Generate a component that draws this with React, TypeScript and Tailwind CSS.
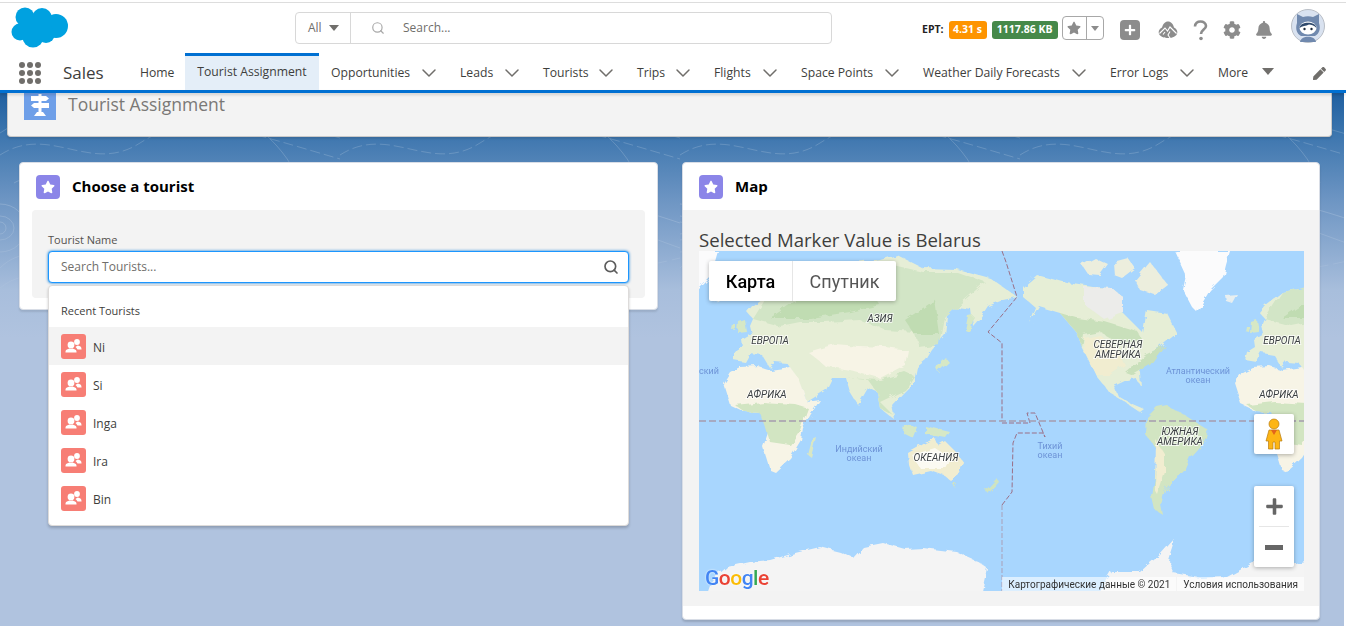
import { FaBell, FaCog, FaPen, FaPlus, FaStar } from 'react-icons/fa'
import { ChevronDown, Search } from 'lucide-react'

const navItems = [
  { label: 'Opportunities', w: 'w-[79px]' },
  { label: 'Leads', w: 'w-[33px]' },
  { label: 'Tourists', w: 'w-[44px]' },
  { label: 'Trips', w: 'w-[27px]' },
  { label: 'Flights', w: 'w-[37px]' },
  { label: 'Space Points', w: 'w-[72px]' },
  { label: 'Weather Daily Forecasts', w: 'w-[137px]' },
  { label: 'Error Logs', w: 'w-[58px]' },
]

const tourists = ['Ni', 'Si', 'Inga', 'Ira', 'Bin']

function Cloud() {
  return (
    <svg viewBox="0 0 58 42" className="h-[42px] w-[58px]" fill="#00a1e0">
      <circle cx="14" cy="10" r="9.5" />
      <circle cx="31" cy="11" r="10" />
      <circle cx="45" cy="19" r="12" />
      <circle cx="9" cy="25" r="8.5" />
      <circle cx="22" cy="30" r="10.5" />
      <circle cx="35" cy="27" r="9" />
      <rect x="10" y="10" width="30" height="20" />
    </svg>
  )
}

function Trailhead() {
  return (
    <svg viewBox="0 0 20 18" className="h-[18px] w-5">
      <path d="M10 0.5 C13 0.5 15 3 16 6.5 C19 8 20 10.5 19 13 C17 16.5 13 17 10 17 C7 17 3 16.5 1 13 C0 10.5 1 8 4 6.5 C5 3 7 0.5 10 0.5 Z" fill="#8c8c8c" />
      <path d="M1.5 12.5 L7 7 L9.5 10 L12 6 L18.5 12.5 M7 11 L5 13.5 M12 10.5 L10 14 L12 17" stroke="#fff" strokeWidth="1.1" fill="none" />
    </svg>
  )
}

function QuestionMark() {
  return (
    <svg viewBox="0 0 15 21" className="h-[21px] w-[15px]">
      <path d="M2 6.5 C2 3 4.5 1.5 7.5 1.5 C10.5 1.5 13 3.2 13 6 C13 9.5 8 9.8 8 14" fill="none" stroke="#8c8c8c" strokeWidth="2.6" />
      <circle cx="8" cy="18.5" r="1.8" fill="#8c8c8c" />
    </svg>
  )
}

function Astro() {
  return (
    <svg viewBox="0 0 34 34" className="h-[34px] w-[34px]">
      <circle cx="17" cy="17" r="16.5" fill="#d9e2f0" stroke="#b9bec6" />
      <path d="M6 5 L12 8 C15 7 19 7 22 8 L28 5 L28 14 C30 20 28 25 24 27 L10 27 C6 25 4 20 6 14 Z" fill="#7089ae" />
      <ellipse cx="17" cy="19" rx="8.5" ry="6.5" fill="#ffffff" />
      <path d="M8.5 19 C9 12 25 12 25.5 19 C23 16 20 15.5 18 15.5 C15 17 11 17 8.5 19 Z" fill="#2f4a6d" />
      <circle cx="13.5" cy="20" r="1.2" fill="#1d2b3e" />
      <circle cx="20.5" cy="20" r="1.2" fill="#1d2b3e" />
      <path d="M9 33 C10 26 24 26 25 33 Z" fill="#7089ae" />
    </svg>
  )
}

function People() {
  return (
    <svg viewBox="0 0 25 25" className="mt-px h-[25px] w-[25px] rounded-[3px] bg-[#f77e75]">
      <circle cx="16" cy="8" r="2.9" fill="#fff" />
      <path d="M16.8 11.6 C19 12 20.5 13 20.5 15 L20.5 15.6 L16.5 15.6 C16 14.4 15 13.6 14.5 13 C15 12.4 16 12 16.8 11.6 Z" fill="#fff" />
      <circle cx="10" cy="11" r="3.4" fill="#fff" />
      <path d="M4.5 18.5 L4.5 17.5 C4.5 15.6 7 15 8.5 14.5 C9.5 15.1 10.5 15.1 11.5 14.5 C13 15 15.5 15.6 15.5 17.5 L15.5 18.5 Z" fill="#fff" />
    </svg>
  )
}

function StarTile() {
  return (
    <span className="flex h-6 w-6 items-center justify-center rounded-[4px] bg-[#8b85e8]">
      <FaStar className="h-[14px] w-[14px] text-white" />
    </span>
  )
}

function Signpost() {
  return (
    <svg viewBox="0 0 32 27" className="h-[27px] w-8">
      <rect x="14.5" y="1" width="3" height="22" fill="#fff" />
      <path d="M7 3 H22 L25 5.5 L22 8 H7 Z" fill="#fff" />
      <path d="M25 10 H10 L7 12.5 L10 15 H25 Z" fill="#fff" />
      <path d="M10 23 H22 L19 19 H13 Z" fill="#fff" />
    </svg>
  )
}

function Contours() {
  return (
    <svg className="pointer-events-none absolute inset-0 h-full w-full [mask-image:linear-gradient(180deg,#000_0%,#000_22%,transparent_42%)]">
      <defs>
        <pattern id="topo" width="340" height="210" patternUnits="userSpaceOnUse">
          <g fill="none" stroke="#ffffff" strokeOpacity="0.17" strokeWidth="1">
            <path d="M0 40 C40 10 80 60 130 30 S220 10 340 45" />
            <path d="M0 62 C50 30 90 82 140 50 S230 34 340 66" strokeDasharray="10 4" />
            <circle cx="0" cy="135" r="6" />
            <ellipse cx="0" cy="135" rx="14" ry="12" />
            <ellipse cx="0" cy="135" rx="26" ry="24" />
            <path d="M0 175 C20 155 40 165 60 150 C90 130 110 160 170 130 S250 100 340 130" />
            <path d="M0 195 C30 170 60 195 90 170 C120 145 160 195 190 150 S270 130 340 155" />
            <path d="M150 210 C170 180 240 190 340 165" strokeDasharray="14 5" />
            <path d="M230 0 C240 30 280 40 300 90" />
            <path d="M10 0 C15 18 30 25 50 20" />
            <path d="M14 90 C30 80 50 90 56 120" />
          </g>
        </pattern>
      </defs>
      <rect width="100%" height="100%" fill="url(#topo)" />
    </svg>
  )
}

const landLabel = 'fill-[#3c4043] stroke-white/70 text-[10px] italic [paint-order:stroke] [stroke-width:2px]'
const seaLabel = 'fill-[#6d93d6] text-[9px]'

function WorldMap() {
  return (
    <svg viewBox="699 251 605 340" className="absolute inset-0 h-[340px] w-[605px]" style={{ fontFamily: 'Roboto, sans-serif' }}>
      <rect x="699" y="251" width="605" height="340" fill="#a8d6fe" />
      <defs>
        {/* rough coasts */}
        <filter id="coast" filterUnits="userSpaceOnUse" x="600" y="200" width="800" height="450">
          <feTurbulence type="fractalNoise" baseFrequency="0.09" numOctaves="3" seed="4" result="n" />
          <feDisplacementMap in="SourceGraphic" in2="n" scale="7" />
        </filter>
        <g id="oldworld">
          {/* eurasia */}
          <path fill="#e6eed6" d="M733 360 L735 352 L743 347 L742 340 L752 334 L750 326 L753 319 L747 312 L753 305 L770 292 L787 289 L797 293 L815 280 L830 272 L845 270 L857 263 L880 260 L897 255 L923 268 L957 269 L990 278 L1017 297 L1003 300 L988 306 L980 318 L973 326 L971 309 L957 307 L947 316 L945 335 L932 350 L926 360 L917 367 L914 382 L903 393 L892 405 L895 420 L880 408 L877 392 L868 388 L858 405 L850 392 L846 378 L832 378 L826 390 L807 402 L797 378 L787 363 L775 362 L770 368 L762 355 L750 353 L745 362 Z" />
          <path fill="#d2e5c6" d="M753 319 L770 292 L787 289 L815 280 L845 270 L880 262 L923 272 L957 272 L985 282 L960 304 L945 318 L940 345 L920 348 L915 332 L885 330 L860 320 L825 322 L800 322 L780 326 Z" />
          <path fill="#c0dcb2" d="M770 318 L800 298 L840 285 L870 288 L880 305 L850 312 L810 318 Z M905 320 L935 300 L940 335 L915 335 Z" />
          <path fill="#f7f4e6" d="M808 352 L835 344 L858 346 L885 347 L908 350 L905 365 L880 378 L850 370 L825 366 Z" />
          <path fill="#cfe4c2" d="M846 378 L868 380 L877 392 L880 408 L893 415 L880 402 L905 390 L914 376 L905 372 L880 380 Z" />
          {/* uk, japan, islands */}
          <path fill="#d6e8c6" d="M739 322 L745 320 L747 332 L738 333 Z M733 325 L737 325 L736 331 L732 330 Z M968 316 L973 315 L969 332 L965 330 Z M936 368 L946 358 L949 362 L938 372 Z M903 423 L918 428 L914 438 L902 432 Z M925 426 L950 432 L946 438 L925 434 Z" />
          {/* africa */}
          <path fill="#f7f4e6" d="M723 383 L730 372 L740 367 L758 366 L770 370 L790 367 L798 378 L807 402 L820 400 L811 414 L803 428 L801 440 L790 458 L775 472 L770 470 L763 447 L769 430 L763 413 L745 412 L730 405 Z" />
          <path fill="#d2e5c2" d="M735 405 L763 402 L795 404 L808 408 L800 430 L790 445 L770 442 L765 425 L760 413 L745 412 Z" />
          <path fill="#d9e7c4" d="M812 440 L817 438 L812 458 L808 455 Z" />
          {/* australia */}
          <path fill="#f1edd0" d="M908 453 L917 448 L925 443 L935 438 L938 445 L945 441 L956 452 L964 463 L958 474 L950 480 L944 475 L930 470 L912 474 L909 465 Z" />
          <path fill="#fbfaf2" d="M912 455 L935 448 L950 458 L945 468 L920 468 Z" />
          <path fill="#cfe4c2" d="M986 490 L997 478 L999 482 L988 494 Z M953 484 L957 484 L955 488 Z" />
        </g>
        <g id="newworld">
          {/* north america */}
          <path fill="#e6eed6" d="M1023 287 L1037 275 L1067 283 L1093 287 L1112 288 L1123 297 L1123 313 L1143 333 L1147 310 L1167 313 L1177 333 L1160 347 L1147 355 L1140 372 L1141 387 L1136 378 L1127 380 L1114 386 L1118 396 L1130 403 L1144 409 L1140 412 L1122 400 L1110 393 L1097 377 L1082 347 L1077 333 L1060 313 L1040 307 L1030 323 L1036 308 L1023 297 Z" />
          <path fill="#ececea" d="M1085 287 L1112 288 L1123 297 L1123 313 L1105 320 L1085 305 Z" />
          <path fill="#c9e0bb" d="M1060 313 L1077 318 L1105 322 L1138 332 L1143 340 L1125 345 L1100 332 L1084 335 L1082 347 L1077 333 Z M1145 355 L1165 345 L1150 365 L1133 375 L1125 372 Z" />
          <path fill="#f1edd0" d="M1084 338 L1100 335 L1118 350 L1125 365 L1110 375 L1096 375 L1085 352 Z" />
          <path fill="#eceedd" d="M1082 265 L1095 258 L1108 264 L1100 275 L1088 274 Z M1113 262 L1128 258 L1135 268 L1122 278 L1114 275 Z M1135 280 L1150 262 L1168 285 L1155 295 L1140 290 Z" />
          {/* greenland */}
          <path fill="#fbfbfc" d="M1175 251 L1230 251 L1226 265 L1223 277 L1210 290 L1197 312 L1192 307 L1183 290 L1186 275 Z" />
          <path fill="#e8eff0" d="M1225 295 L1237 294 L1232 303 L1226 301 Z" />
          {/* south america */}
          <path fill="#d2e5c2" d="M1147 417 L1157 407 L1167 405 L1187 417 L1208 430 L1205 440 L1190 457 L1185 468 L1175 478 L1165 490 L1161 505 L1163 515 L1155 510 L1152 497 L1155 477 L1157 450 L1146 435 Z" />
          <path fill="#f1edd0" d="M1156 440 L1165 455 L1165 472 L1158 495 L1155 490 Z" />
        </g>
      </defs>
      <g filter="url(#coast)">
        <use href="#newworld" x="-512" />
        <use href="#oldworld" />
        <use href="#newworld" />
        <use href="#oldworld" x="512" />
        {/* antarctica */}
        <path fill="#f4f4f4" d="M705 600 L712 580 L727 567 L750 562 L770 560 L795 553 L820 547 L840 552 L853 558 L863 547 L883 543 L905 549 L923 548 L957 552 L975 560 L987 568 L980 600 Z M1095 600 L1112 572 L1140 572 L1150 563 L1160 555 L1175 538 L1168 560 L1174 574 L1200 578 L1227 577 L1253 563 L1285 565 L1320 558 L1320 600 Z" />
      </g>
      {/* date line and equator */}
      <g fill="none" stroke="#9a6f86" strokeWidth="1" strokeDasharray="5 2">
        <path d="M1002 251 L1006 262 L1017 297 L988 332 L1002 343 L1002 421" />
        <path d="M1002 505 L1012 492 L1013 443 L1017 433 L1043 433 L1045 437" />
        <path d="M1002 505 L1002 591" stroke="#a9a0b8" />
        <path d="M1002 423 L1030 423 L1027 413 L1035 413 L1045 437" />
      </g>
      <path d="M699 421 L1304 421" stroke="#a59cae" strokeWidth="1.5" strokeDasharray="7 3" fill="none" />
      {/* labels */}
      <text x="880" y="322" textAnchor="middle" className={landLabel}>АЗИЯ</text>
      <text x="770" y="344" textAnchor="middle" className={landLabel}>ЕВРОПА</text>
      <text x="1282" y="344" textAnchor="middle" className={landLabel}>ЕВРОПА</text>
      <text x="767" y="398" textAnchor="middle" className={landLabel}>АФРИКА</text>
      <text x="1279" y="398" textAnchor="middle" className={landLabel}>АФРИКА</text>
      <text x="1118" y="348" textAnchor="middle" className={landLabel}>СЕВЕРНАЯ</text>
      <text x="1118" y="358" textAnchor="middle" className={landLabel}>АМЕРИКА</text>
      <text x="1180" y="435" textAnchor="middle" className={landLabel}>ЮЖНАЯ</text>
      <text x="1180" y="445" textAnchor="middle" className={landLabel}>АМЕРИКА</text>
      <text x="936" y="461" textAnchor="middle" className={landLabel}>ОКЕАНИЯ</text>
      <text x="1198" y="374" textAnchor="middle" className={seaLabel}>Атлантический</text>
      <text x="1198" y="383" textAnchor="middle" className={seaLabel}>океан</text>
      <text x="699" y="374" className={seaLabel}>ский</text>
      <text x="859" y="452" textAnchor="middle" className={seaLabel}>Индийский</text>
      <text x="859" y="461" textAnchor="middle" className={seaLabel}>океан</text>
      <text x="1050" y="449" textAnchor="middle" className={seaLabel}>Тихий</text>
      <text x="1050" y="458" textAnchor="middle" className={seaLabel}>океан</text>
    </svg>
  )
}

function Pegman() {
  return (
    <svg viewBox="0 0 18 32" className="h-8 w-[18px]">
      <circle cx="9" cy="6" r="5" fill="#fdb515" stroke="#b87b10" strokeWidth="0.7" />
      <path d="M4 12 H14 L17 23 H14.5 V31 H10 V24 H8 V31 H3.5 V23 H1 Z" fill="#fdb515" stroke="#b87b10" strokeWidth="0.7" />
      <path d="M6 12 H12 L9 17 Z" fill="#e2641c" />
    </svg>
  )
}

function MapView() {
  return (
    <div className="relative h-[340px] w-[605px] overflow-hidden">
      <WorldMap />
      <div className="absolute left-[10px] top-[10px] flex h-10 rounded-[2px] bg-white text-[18px] shadow-[0_1px_4px_rgba(0,0,0,0.3)]" style={{ fontFamily: 'Roboto, sans-serif' }}>
        <div className="flex w-[84px] items-center justify-center border-r border-[#e6e6e6] font-medium text-black">Карта</div>
        <div className="flex w-[103px] items-center justify-center text-[#565656]">Спутник</div>
      </div>
      <div className="absolute left-[555px] top-[163px] flex h-10 w-10 items-center justify-center rounded-[2px] bg-white shadow-[0_1px_4px_rgba(0,0,0,0.3)]">
        <Pegman />
      </div>
      <div className="absolute left-[555px] top-[235px] flex h-[81px] w-10 flex-col items-center rounded-[2px] bg-white shadow-[0_1px_4px_rgba(0,0,0,0.3)]">
        <div className="flex h-10 w-full items-center justify-center">
          <FaPlus className="h-[19px] w-[19px] text-[#666666]" />
        </div>
        <div className="h-px w-[30px] bg-[#e6e6e6]" />
        <div className="flex h-10 w-full items-center justify-center">
          <div className="h-[5px] w-[18px] bg-[#666666]" />
        </div>
      </div>
      <div className="absolute bottom-[2px] left-[6px] flex text-[21px] font-medium leading-none tracking-[-0.5px] [text-shadow:0_0_2px_#fff]" style={{ fontFamily: 'Roboto, sans-serif' }}>
        <span className="text-[#4285f4]">G</span>
        <span className="text-[#ea4335]">o</span>
        <span className="text-[#fbbc05]">o</span>
        <span className="text-[#4285f4]">g</span>
        <span className="text-[#34a853]">l</span>
        <span className="text-[#ea4335]">e</span>
      </div>
      <div className="absolute bottom-0 right-0 flex h-[14px] items-center text-[10px] text-[#333333]" style={{ fontFamily: 'Roboto, sans-serif' }}>
        <span className="bg-white/60 pl-[6px] pr-[6px]">Картографические данные © 2021</span>
        <span className="ml-px bg-white/60 pl-[6px] pr-[6px]">Условия использования</span>
      </div>
    </div>
  )
}

export default function App() {
  return (
    <div className="flex h-[626px] w-full flex-col overflow-hidden bg-white text-[#3e3e3c]" style={{ fontFamily: '"Open Sans", sans-serif' }}>
      <header className="relative z-10 shrink-0 bg-white">
        <div className="mt-[2px] h-px bg-[#dddddd]" />
        <div className="flex h-[50px] items-center pt-1">
          <div className="ml-[11px] mt-[-4px] w-[58px]">
            <Cloud />
          </div>
          <div className="ml-[226px] mt-[-4px] flex h-8 w-[537px] items-center rounded-[4px] border border-[#d8d8d8] text-[12px] text-[#706e6b]">
            <div className="flex h-full w-[55px] items-center gap-[7px] border-r border-[#d8d8d8] pl-3">
              <span>All</span>
              <span className="h-0 w-0 border-x-[5px] border-t-[6px] border-x-transparent border-t-[#706e6b]" />
            </div>
            <Search className="ml-[20px] h-[14px] w-[14px] text-[#a8a8a8]" />
            <span className="ml-[18px]">Search...</span>
          </div>
          <span className="ml-[90px] text-[10.5px] font-bold text-[#222222]">EPT:</span>
          <span className="ml-[5px] flex h-[18px] w-[38px] items-center justify-center rounded-[3px] bg-[#fe9400] text-[10.5px] font-bold text-white">4.31 s</span>
          <span className="ml-[5px] flex h-[18px] w-[66px] items-center justify-center rounded-[3px] bg-[#46894a] text-[10.5px] font-bold text-white">1117.86 KB</span>
          <div className="ml-1 mt-[-4px] flex h-6 w-[42px] rounded-[4px] border border-[#a8a8a8]">
            <div className="flex w-[24px] items-center justify-center border-r border-[#a8a8a8]">
              <FaStar className="h-[14px] w-[14px] text-[#8c8c8c]" />
            </div>
            <div className="flex flex-1 items-center justify-center">
              <span className="h-0 w-0 border-x-[4px] border-t-[5px] border-x-transparent border-t-[#8c8c8c]" />
            </div>
          </div>
          <span className="ml-4 flex h-5 w-5 items-center justify-center rounded-[4px] bg-[#8c8c8c]">
            <FaPlus className="h-3 w-3 text-white" />
          </span>
          <span className="ml-[18px]"><Trailhead /></span>
          <span className="ml-[15px]"><QuestionMark /></span>
          <FaCog className="ml-[15px] h-[18px] w-[18px] text-[#8c8c8c]" />
          <FaBell className="ml-[14px] h-[18px] w-[18px] text-[#8c8c8c]" />
          <span className="ml-[18px] mt-[-8px]"><Astro /></span>
        </div>
        <nav className="flex h-[37px] items-center pt-[3px] text-[12.2px] text-[#3e3e3c]">
          <div className="ml-[19px] grid w-[22px] grid-cols-3 gap-[2.5px]">
            {Array.from({ length: 9 }).map((_, i) => (
              <span key={i} className="h-[5.5px] w-[5.5px] rounded-full bg-[#706e6b]" />
            ))}
          </div>
          <span className="ml-[22px] w-[77px] text-[17px]">Sales</span>
          <span className="w-[45px] whitespace-nowrap">Home</span>
          <span className="-mt-[3px] mr-3 flex h-[37px] w-[134px] items-center justify-center whitespace-nowrap border-t-[3px] border-[#0070d2] bg-[#e4eef8] pb-px">Tourist Assignment</span>
          {navItems.map((item) => (
            <span key={item.label} className="flex items-center">
              <span className={`${item.w} whitespace-nowrap`}>{item.label}</span>
              <ChevronDown strokeWidth={1.5} className="ml-[7px] mr-[19px] h-6 w-6 text-[#706e6b]" />
            </span>
          ))}
          <span className="w-[31px]">More</span>
          <span className="ml-[13px] mb-1 h-0 w-0 border-x-[6px] border-t-[7px] border-x-transparent border-t-[#706e6b]" />
          <FaPen className="ml-[39px] h-[13px] w-[13px] text-[#706e6b]" />
        </nav>
        <div className="h-[3px] bg-[#0070d2] shadow-[0_2px_3px_rgba(0,0,0,0.15)]" />
      </header>

      <main className="relative mr-[2px] flex-1 bg-[linear-gradient(180deg,#1f5fa0_0%,#3a74ad_7%,#6d95c3_20%,#a8bedc_37%,#b0c3df_46%,#b0c3df_100%)]">
        <Contours />
        <div className="relative flex h-full flex-col">
          <section className="ml-[7px] mr-3 flex h-11 items-start rounded-b-[4px] border border-t-0 border-[#c9c9c9] bg-[#f3f3f3] shadow-[0_2px_2px_rgba(0,0,0,0.1)]">
            <div className="ml-4 flex h-[27px] w-8 bg-[#6e9fe8]">
              <Signpost />
            </div>
            <h1 className="ml-3 text-[17.5px] leading-[23px] text-[#7a7876]">Tourist Assignment</h1>
          </section>

          <div className="ml-[19px] mr-[24px] mt-[25px] flex items-start gap-6">
            <section className="relative h-[148px] w-[639px] rounded-[4px] border border-[#d8dde6] bg-white shadow-[0_2px_2px_rgba(0,0,0,0.1)]">
              <div className="flex h-[47px] items-center pl-4">
                <StarTile />
                <h2 className="ml-3 text-[15px] font-bold text-black">Choose a tourist</h2>
              </div>
              <div className="mx-3 h-[88px] rounded-[4px] bg-[#f3f3f3] px-4 pt-[22px]">
                <label className="block text-[11px] leading-[16px] text-[#54514f]">Tourist Name</label>
                <div className="mt-[3px] flex h-8 items-center justify-between rounded-[4px] border border-[#1b96ff] bg-white pl-3 pr-[9px] shadow-[0_0_3px_#0176d3]">
                  <span className="text-[12px] text-[#706e6b]">Search Tourists...</span>
                  <Search strokeWidth={2.5} className="h-4 w-4 text-[#5c5c5c]" />
                </div>
              </div>
              {/* dropdown hangs over the card */}
              <div className="absolute left-[28px] top-[122px] z-10 h-[241px] w-[581px] rounded-[4px] border border-[#dddbda] bg-white shadow-[0_2px_3px_rgba(0,0,0,0.2)]">
                <div className="flex h-[41px] items-center pl-3 pt-[10px] text-[11px] text-[#3e3e3c]">Recent Tourists</div>
                {tourists.map((name, i) => (
                  <div key={name} className={`flex h-[38px] items-center pl-3 text-[12px] text-[#3e3e3c] ${i === 0 ? 'bg-[#f3f3f3]' : 'bg-white'}`}>
                    <People />
                    <span className="ml-[7px] mt-1">{name}</span>
                  </div>
                ))}
              </div>
            </section>

            <section className="h-[458px] w-[638px] rounded-[4px] border border-[#d8dde6] bg-white shadow-[0_2px_2px_rgba(0,0,0,0.15)]">
              <div className="flex h-[47px] items-center pl-4">
                <StarTile />
                <h2 className="ml-3 text-[15px] font-bold text-black">Map</h2>
              </div>
              <div className="h-[396px] bg-[#f3f3f3] px-4 pt-[19px]">
                <p className="whitespace-nowrap text-[18.6px] leading-[22px] text-[#3e3e3c]">Selected Marker Value is Belarus</p>
                <MapView />
              </div>
            </section>
          </div>
        </div>
      </main>
    </div>
  )
}
